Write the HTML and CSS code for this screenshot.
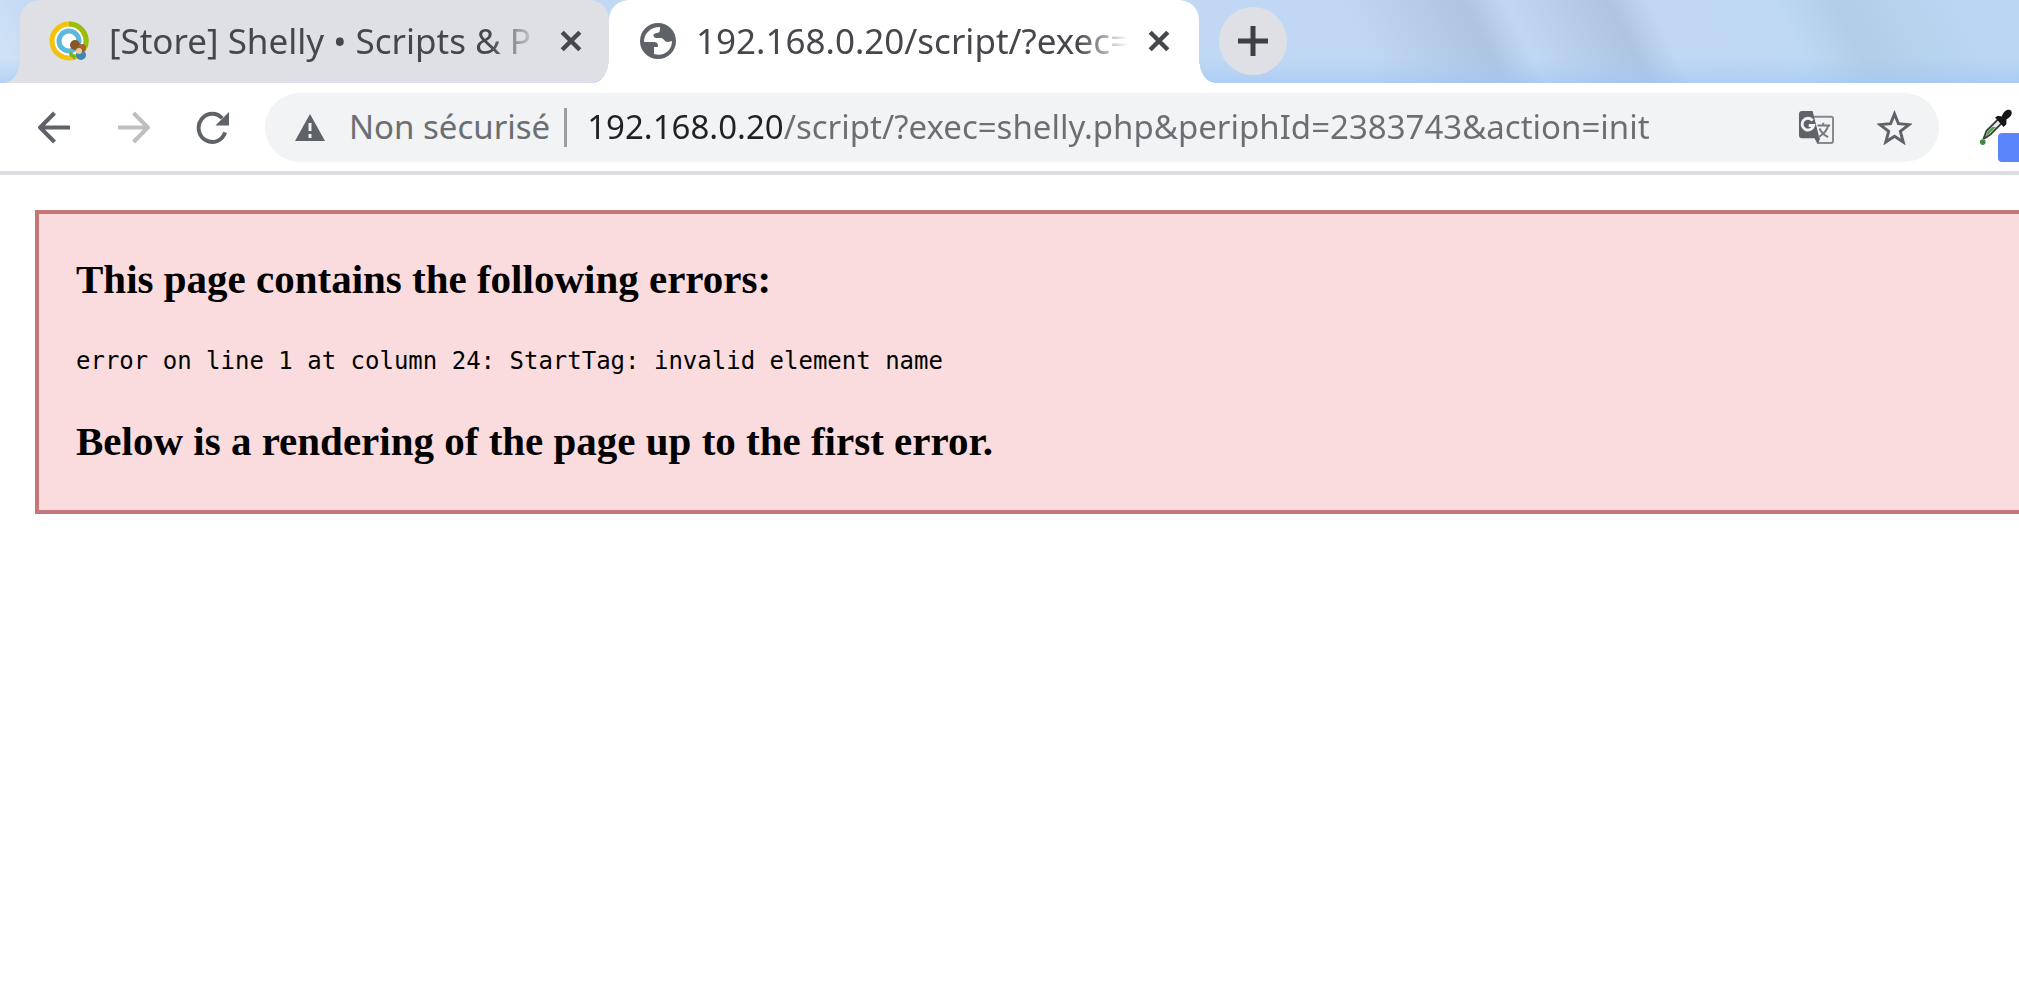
FILE: index.html
```html
<!DOCTYPE html>
<html lang="fr">
<head>
  <meta charset="UTF-8">
  <meta name="viewport" content="width=device-width, initial-scale=1">
  <title>192.168.0.20/script/?exec=shelly.php</title>
  <link rel="stylesheet" href="styles.css">
</head>
<body>
  <header>
    <nav class="tab-strip">
      <div class="tab">
        <svg class="favicon" viewBox="0 0 40 40">
          <circle cx="20" cy="20" r="17" fill="#fff" stroke="#f4c20d" stroke-width="5"/>
          <path d="M20 3a17 17 0 0 1 16 23" fill="none" stroke="#97bf0d" stroke-width="5"/>
          <circle cx="20" cy="20" r="10" fill="#fff" stroke="#5cb9da" stroke-width="5"/>
          <path d="M21 30l6 5-1 4-6-5z" fill="#6fb52c"/>
          <circle cx="32" cy="34" r="5" fill="#3f87b0"/>
          <circle cx="26" cy="24" r="5" fill="#8a5528"/>
          <circle cx="33" cy="27" r="4" fill="#a5632c"/>
          <circle cx="30" cy="30" r="3" fill="#f3c9a0"/>
        </svg>
        <button class="tab-title">[Store] Shelly • Scripts &amp; P</button>
        <button class="tab-close" aria-label="Fermer">
          <svg viewBox="0 0 20 20"><path d="M2 2l16 16M18 2L2 18"/></svg>
        </button>
      </div>
      <div class="tab active">
        <svg class="favicon globe" viewBox="0 0 36 36">
          <circle cx="18" cy="18" r="18" fill="#5f6368"/>
          <path d="M20 4C11 4 4 10 4 19h9c4 0 5 1 5 5h-4v7c9 3 18-3 18-13l-4 1c-4 0-4-4-7-4h-5c-4-1-3-5 1-5 3 0 3-3 3-6z" fill="#fff"/>
        </svg>
        <button class="tab-title">192.168.0.20/script/?exec=</button>
        <button class="tab-close" aria-label="Fermer">
          <svg viewBox="0 0 20 20"><path d="M2 2l16 16M18 2L2 18"/></svg>
        </button>
      </div>
      <button class="new-tab" aria-label="Nouvel onglet">
        <svg viewBox="0 0 30 30"><path d="M15 0v30M0 15h30"/></svg>
      </button>
    </nav>

    <div class="toolbar">
      <button class="nav-button" aria-label="Retour">
        <svg viewBox="0 0 32 32"><path d="M31 16H3M16 2L2 16l14 14"/></svg>
      </button>
      <button class="nav-button forward" aria-label="Avancer">
        <svg viewBox="0 0 32 32"><path d="M1 16h28M16 2l14 14-14 14"/></svg>
      </button>
      <button class="nav-button" aria-label="Actualiser">
        <svg viewBox="0 0 34 32"><path d="M27 6.500A14 14.500 0 1 0 30 21"/><path class="solid" d="M34 0v14H20z"/></svg>
      </button>
      <form class="omnibox">
        <svg class="warning" viewBox="0 0 30 27">
          <path d="M15 0l15 27H0z" fill="#5f6368"/>
          <path d="M15 9v8M15 20v4" stroke="#f1f3f4" stroke-width="3"/>
        </svg>
        <label for="url">Non sécurisé</label>
        <span class="divider"></span>
        <input id="url" type="text" spellcheck="false" value="192.168.0.20/script/?exec=shelly.php&amp;periphId=2383743&amp;action=init">
        <button type="button" class="page-action" aria-label="Traduire">
          <svg viewBox="0 0 36 36">
            <path d="M14 7h19a2 2 0 0 1 2 2v23a2 2 0 0 1-2 2H20z" fill="#f1f3f4" stroke="#85888c" stroke-width="2"/>
            <path d="M3 1h11l7 28H3a3 3 0 0 1-3-3V4a3 3 0 0 1 3-3zM16 29h6l-3 6z" fill="#5f6368"/>
            <path d="M14 11a6 6 0 1 0 1 5h-5" fill="none" stroke="#f1f3f4" stroke-width="3"/>
            <path d="M19 16h13M25 13v3M30 16c-1 5-5 9-10 12M21 19c2 4 5 7 9 9" fill="none" stroke="#77797d" stroke-width="2"/>
          </svg>
        </button>
        <button type="button" class="page-action" aria-label="Ajouter aux favoris">
          <svg viewBox="0 0 36 36">
            <path d="M18 4l4 10 11 1-9 7 3 11-9-6-9 6 3-11-9-7 11-1z" fill="none" stroke="#5f6368" stroke-width="3"/>
          </svg>
        </button>
      </form>
      <button class="extension" aria-label="Pipette">
        <svg viewBox="0 0 36 38">
          <path d="M5 31l3-8L21 10l4 4-13 13-6 4z" fill="#e6eee6" stroke="#3a3f3a" stroke-width="2"/>
          <path d="M9 24l5-5h4l-7 7-4 3z" fill="#4da64d"/>
          <path d="M17 9l3-2 4 1c2-5 5-8 9-7 3 2 2 7-4 10v5l-3 3z" fill="#161616"/>
          <circle cx="4" cy="35" r="3" fill="#3d8a42"/>
        </svg>
        <span class="badge"></span>
      </button>
    </div>
  </header>

  <main class="parser-error">
    <h3>This page contains the following errors:</h3>
    <div class="message">error on line 1 at column 24: StartTag: invalid element name</div>
    <h3>Below is a rendering of the page up to the first error.</h3>
  </main>
</body>
</html>
```
FILE: styles.css
```css
:root {
  --ui-font: "Noto Sans", "Open Sans", sans-serif;
  --icon: #5f6368;
  --tab-bg: #dee0e5;
  --field-bg: #f1f3f4;
  --host-width: 195px;
}
* {
  box-sizing: border-box;
}
body {
  margin: 0;
  background: #fff;
  overflow-x: hidden;
}
button {
  padding: 0;
  border: none;
  background: none;
  cursor: pointer;
}
svg {
  display: block;
}

/* tabs */
.tab-strip {
  display: flex;
  align-items: center;
  height: 83px;
  padding-left: 20px;
  background:
    linear-gradient(to bottom, transparent 70%, rgba(160, 198, 245, 0.6)),
    linear-gradient(63deg, #d3e5f5, transparent 4%),
    linear-gradient(63deg, transparent 67%, #aec5e2 73%, #c1d8f4 75%, #aec5e2 80%, #c1d8f4 82%, #bfd9f3 88%, #b2cee6 91%, #bad6f3 97%),
    #c1d8f4;
}
.tab {
  position: relative;
  display: flex;
  align-items: center;
  flex: 0 1 589px;
  min-width: 0;
  height: 100%;
  padding: 0 27px 2px 29px;
  border-radius: 20px;
  border-bottom-left-radius: 0;
  background: var(--tab-bg);
}
.tab.active {
  flex-basis: 590px;
  padding-left: 31px;
  padding-right: 29px;
  border-radius: 20px 20px 0 0;
  background: #fff;
}
.tab::before,
.tab.active::after {
  content: "";
  position: absolute;
  bottom: 0;
  width: 16px;
  height: 24px;
}
.tab::before {
  right: 100%;
  background: radial-gradient(ellipse 16px 24px at 0 0, transparent 98%, var(--tab-bg) 100%);
}
.tab.active::before {
  background: radial-gradient(ellipse 16px 24px at 0 0, transparent 98%, #fff 100%);
}
.tab.active::after {
  left: 100%;
  background: radial-gradient(ellipse 16px 24px at 100% 0, transparent 98%, #fff 100%);
}
.favicon {
  flex: none;
  width: 40px;
  height: 40px;
}
.favicon.globe {
  width: 36px;
  height: 36px;
}
.tab-title {
  flex: 1;
  min-width: 0;
  margin: 0 12px 0 20px;
  overflow: hidden;
  white-space: nowrap;
  text-align: left;
  font: 35px/48px var(--ui-font);
  color: #45474c;
  -webkit-mask-image: linear-gradient(to left, transparent 8px, #000 58px);
  mask-image: linear-gradient(to left, transparent 8px, #000 58px);
}
.tab-close svg {
  width: 22px;
  height: 22px;
  fill: none;
  stroke: #45474c;
  stroke-width: 4;
}
.new-tab {
  display: grid;
  place-items: center;
  flex: none;
  width: 68px;
  height: 68px;
  margin-left: 20px;
  margin-bottom: 2px;
  border-radius: 50%;
  background: var(--tab-bg);
}
.new-tab svg {
  width: 30px;
  height: 30px;
  stroke: #3c4043;
  stroke-width: 5;
}

/* toolbar */
.toolbar {
  display: flex;
  align-items: center;
  height: 92px;
  padding-left: 38px;
  border-bottom: 4px solid #dcdde0;
}
.nav-button {
  flex: none;
  margin-right: 46px;
}
.nav-button svg {
  width: 33px;
  height: 33px;
  fill: none;
  stroke: var(--icon);
  stroke-width: 4;
}
.nav-button.forward svg {
  stroke: #bdbfc1;
}
.nav-button .solid {
  fill: var(--icon);
  stroke: none;
}
.nav-button:nth-child(3) {
  margin-right: 36px;
}
.omnibox {
  display: flex;
  align-items: center;
  flex: 1;
  min-width: 0;
  height: 69px;
  padding: 0 27px 0 30px;
  border-radius: 35px;
  background: var(--field-bg);
}
.warning {
  flex: none;
  width: 30px;
  height: 27px;
  margin-right: 24px;
}
.omnibox label,
.omnibox input {
  font: 33px/48px var(--ui-font);
}
.omnibox label {
  flex: none;
  color: #6b6e72;
}
.divider {
  flex: none;
  width: 3px;
  height: 39px;
  margin: 0 20px 0 14px;
  background: #9b9da0;
}
.omnibox input {
  flex: 1;
  min-width: 0;
  padding: 0;
  border: none;
  outline: none;
  /* host is darker than the rest of the address */
  background: linear-gradient(to right, #202124 var(--host-width), #6b6e72 0);
  -webkit-background-clip: text;
  background-clip: text;
  -webkit-text-fill-color: transparent;
}
.page-action {
  flex: none;
  margin-left: 43px;
}
.page-action svg {
  width: 35px;
  height: 35px;
}
.extension {
  position: relative;
  flex: none;
  width: 40px;
  height: 69px;
  margin-left: 40px;
}
.extension svg {
  width: 34px;
  height: 38px;
}
.badge {
  position: absolute;
  right: 0;
  bottom: 0;
  width: 21px;
  height: 29px;
  border-radius: 4px 0 0 4px;
  background: #5b86fb;
}

/* document */
.parser-error {
  margin: 35px 0 0 35px;
  padding: 33px 37px 37px;
  border: 4px solid #c47679;
  border-right: none;
  background: #fadcde;
  color: #000;
}
.parser-error h3 {
  margin: 0;
  font: bold 41px/64px "Liberation Serif", serif;
}
.message {
  margin: 18px 0 16px;
  font: 24px/64px "DejaVu Sans Mono", monospace;
}
```
